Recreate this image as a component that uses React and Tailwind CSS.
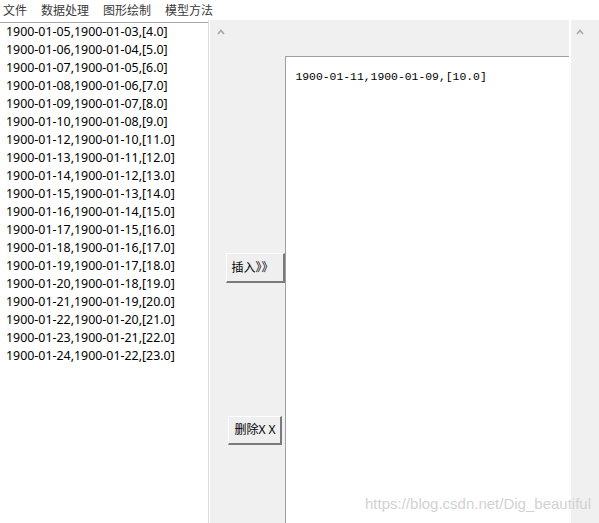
import React from "react";

const pad = (n) => String(n).padStart(2, "0");

// list rows: 1900-01-05 .. 1900-01-24, 01-11 was moved to the right box
const rows = [];
for (let d = 5; d <= 24; d++) {
  if (d === 11) continue;
  rows.push(`1900-01-${pad(d)},1900-01-${pad(d - 2)},[${d - 1}.0]`);
}

const menus = ["文件", "数据处理", "图形绘制", "模型方法"];

function UpArrow() {
  return (
    <svg width="8" height="6" viewBox="0 0 8 6" className="block">
      <polyline points="1,5 4,1.5 7,5" fill="none" stroke="#a6a6a6" strokeWidth="1.6" />
    </svg>
  );
}

function WinButton({ children, className }) {
  return (
    <button
      className={
        "flex items-center bg-[#efefef] border-t border-l border-white border-b-2 border-r-2 border-b-[#7a7a7a] border-r-[#7a7a7a] text-[12px] text-black leading-none " +
        className
      }
      style={{ fontFamily: '"Noto Sans", "Noto Sans CJK SC", sans-serif' }}
    >
      {children}
    </button>
  );
}

export default function App() {
  return (
    <div
      className="relative w-[599px] h-[523px] overflow-hidden bg-white flex flex-col"
      style={{ fontFamily: '"Noto Sans", "Noto Sans CJK SC", sans-serif' }}
    >
      {/* menu bar */}
      <div className="h-[20px] flex items-center gap-[14px] pl-[3px] bg-white text-[12px] text-[#3a3a3a]">
        {menus.map((m) => (
          <span key={m} style={{ fontFamily: '"Noto Sans CJK SC", sans-serif' }}>
            {m}
          </span>
        ))}
      </div>

      <div className="flex flex-1 min-h-0">
        {/* left listbox */}
        <div className="w-[208px] shrink-0 pt-[2px] bg-white">
          <div className="border-t border-[#a8a8a8] h-full">
            {rows.map((r) => (
              <div key={r} className="h-[18px] leading-[18px] pl-[6px] text-[12.4px] text-black whitespace-nowrap">
                {r}
              </div>
            ))}
          </div>
        </div>
        <div className="w-[1px] bg-[#dcdcdc]" />
        <div className="w-[2px] bg-white" />

        {/* middle pane */}
        <div className="flex flex-1 bg-[#f0f0f0]">
          <div className="w-[75px] shrink-0 flex flex-col">
            <div className="ml-[7px] mt-[9px]">
              <UpArrow />
            </div>
            <WinButton className="mt-[218px] ml-[16px] w-[59px] h-[30px] pl-[4px]">插入》》</WinButton>
            <WinButton className="mt-[133px] ml-[18px] w-[54px] h-[29px] pl-[5px]">删除X X</WinButton>
          </div>

          <div className="mt-[36px] w-[284px] bg-white border-t border-l border-[#a0a0a0] pl-[9px] pt-[13px]">
            <div
              className="text-[11.4px] leading-[14px] text-black whitespace-nowrap"
              style={{ fontFamily: '"Liberation Mono", monospace' }}
            >
              1900-01-11,1900-01-09,[10.0]
            </div>
          </div>
        </div>

        {/* right scrollbar */}
        <div className="w-[2px] bg-white" />
        <div className="w-[28px] shrink-0 bg-[#f0f0f0] pt-[9px] pl-[5px]">
          <UpArrow />
        </div>
      </div>

      {/* watermark */}
      <div
        className="absolute right-[8px] bottom-[10px] text-[15px] leading-[18px] text-[#d2d2d2] whitespace-nowrap"
        style={{ fontFamily: '"Liberation Sans", Arial, sans-serif' }}
      >
        https://blog.csdn.net/Dig_beautiful
      </div>
    </div>
  );
}
